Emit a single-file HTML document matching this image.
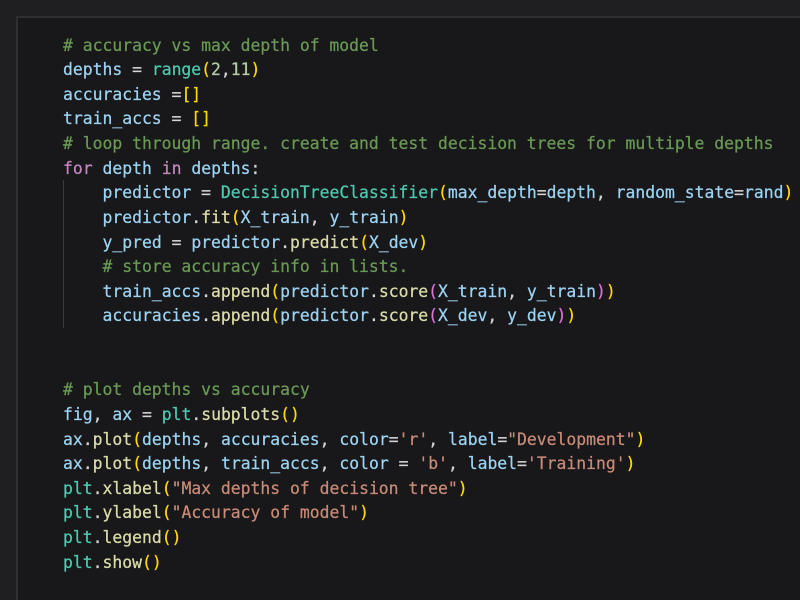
<!DOCTYPE html>
<html><head><meta charset="utf-8"><style>
html,body{margin:0;padding:0;width:800px;height:600px;overflow:hidden;background:#1f1f21}
#p{position:absolute;left:16px;top:16px;width:784px;height:584px;background:#18181a;border-left:2px solid #2f2f31;border-top:2px solid #2f2f31;box-sizing:border-box}
#g{position:absolute;left:63px;top:180px;width:1px;height:148px;background:#3a3a3c}
pre{position:absolute;left:63px;top:33.6px;margin:0;font:16.4px/24.62px "DejaVu Sans Mono",monospace;color:#d4d4d4;white-space:pre;-webkit-text-stroke:.25px currentColor;filter:blur(.35px)}
.c{color:#6a9955}.v{color:#9cd3f2}.t{color:#4ec9b0}.f{color:#dcdcaa}.y{color:#ffd700}.k{color:#c586c0}.p{color:#da70d6}.n{color:#b5cea8}.s{color:#c98a76}
</style></head><body><div id="p"></div><div id="g"></div>
<pre><span class="c"># accuracy vs max depth of model</span>
<span class="v">depths</span> = <span class="t">range</span><span class="y">(</span><span class="n">2</span>,<span class="n">11</span><span class="y">)</span>
<span class="v">accuracies</span> =<span class="y">[]</span>
<span class="v">train_accs</span> = <span class="y">[]</span>
<span class="c"># loop through range. create and test decision trees for multiple depths</span>
<span class="k">for</span> <span class="v">depth</span> <span class="k">in</span> <span class="v">depths</span>:
    <span class="v">predictor</span> = <span class="t">DecisionTreeClassifier</span><span class="y">(</span><span class="v">max_depth</span>=<span class="v">depth</span>, <span class="v">random_state</span>=<span class="v">rand</span><span class="y">)</span>
    <span class="v">predictor</span>.<span class="f">fit</span><span class="y">(</span><span class="v">X_train</span>, <span class="v">y_train</span><span class="y">)</span>
    <span class="v">y_pred</span> = <span class="v">predictor</span>.<span class="f">predict</span><span class="y">(</span><span class="v">X_dev</span><span class="y">)</span>
    <span class="c"># store accuracy info in lists.</span>
    <span class="v">train_accs</span>.<span class="f">append</span><span class="y">(</span><span class="v">predictor</span>.<span class="f">score</span><span class="p">(</span><span class="v">X_train</span>, <span class="v">y_train</span><span class="p">)</span><span class="y">)</span>
    <span class="v">accuracies</span>.<span class="f">append</span><span class="y">(</span><span class="v">predictor</span>.<span class="f">score</span><span class="p">(</span><span class="v">X_dev</span>, <span class="v">y_dev</span><span class="p">)</span><span class="y">)</span>


<span class="c"># plot depths vs accuracy</span>
<span class="v">fig</span>, <span class="v">ax</span> = <span class="t">plt</span>.<span class="f">subplots</span><span class="y">()</span>
<span class="v">ax</span>.<span class="f">plot</span><span class="y">(</span><span class="v">depths</span>, <span class="v">accuracies</span>, <span class="v">color</span>=<span class="s">'r'</span>, <span class="v">label</span>=<span class="s">"Development"</span><span class="y">)</span>
<span class="v">ax</span>.<span class="f">plot</span><span class="y">(</span><span class="v">depths</span>, <span class="v">train_accs</span>, <span class="v">color</span> = <span class="s">'b'</span>, <span class="v">label</span>=<span class="s">'Training'</span><span class="y">)</span>
<span class="t">plt</span>.<span class="f">xlabel</span><span class="y">(</span><span class="s">"Max depths of decision tree"</span><span class="y">)</span>
<span class="t">plt</span>.<span class="f">ylabel</span><span class="y">(</span><span class="s">"Accuracy of model"</span><span class="y">)</span>
<span class="t">plt</span>.<span class="f">legend</span><span class="y">()</span>
<span class="t">plt</span>.<span class="f">show</span><span class="y">()</span></pre>
</body></html>
